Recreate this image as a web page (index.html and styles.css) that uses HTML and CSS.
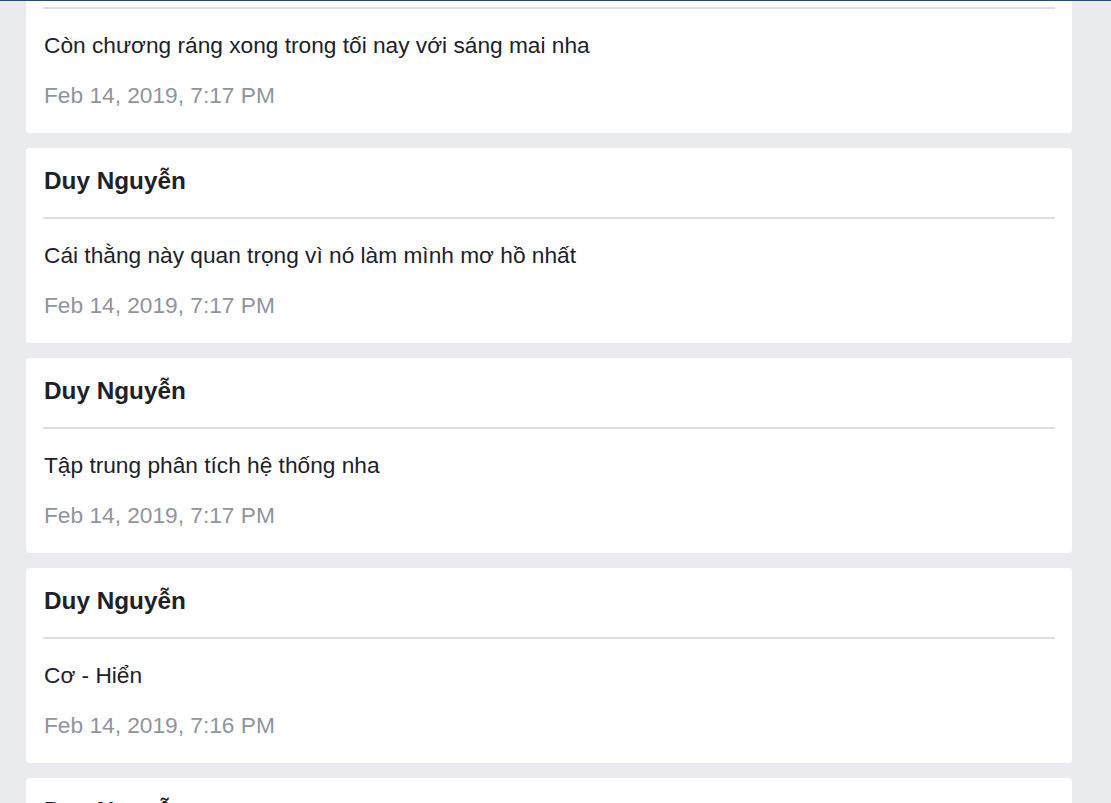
FILE: index.html
```html
<!DOCTYPE html>
<html lang="vi">
<head>
<meta charset="utf-8">
<link rel="stylesheet" href="styles.css">
</head>
<body>
<div class="topbar"></div>
<main class="list">
  <article class="card">
    <header class="card-head">Duy Nguyễn</header>
    <div class="divider"></div>
    <p class="msg">Còn chương ráng xong trong tối nay với sáng mai nha</p>
    <p class="time">Feb 14, 2019, 7:17 PM</p>
  </article>
  <article class="card">
    <header class="card-head">Duy Nguyễn</header>
    <div class="divider"></div>
    <p class="msg">Cái thằng này quan trọng vì nó làm mình mơ hồ nhất</p>
    <p class="time">Feb 14, 2019, 7:17 PM</p>
  </article>
  <article class="card">
    <header class="card-head">Duy Nguyễn</header>
    <div class="divider"></div>
    <p class="msg">Tập trung phân tích hệ thống nha</p>
    <p class="time">Feb 14, 2019, 7:17 PM</p>
  </article>
  <article class="card">
    <header class="card-head">Duy Nguyễn</header>
    <div class="divider"></div>
    <p class="msg">Cơ - Hiển</p>
    <p class="time">Feb 14, 2019, 7:16 PM</p>
  </article>
  <article class="card">
    <header class="card-head">Duy Nguyễn</header>
    <div class="divider"></div>
    <p class="msg">Đọc lại phần này</p>
    <p class="time">Feb 14, 2019, 7:16 PM</p>
  </article>
</main>
</body>
</html>
```
FILE: styles.css
```css
html, body {
  margin: 0;
  padding: 0;
  background: #e9ebee;
  overflow: hidden;
  height: 803px;
}
body {
  font-family: "Liberation Sans", Arial, Helvetica, sans-serif;
  color: #1d2129;
  position: relative;
}
.topbar {
  position: absolute;
  top: 0;
  left: 0;
  right: 0;
  height: 1px;
  background: #29487d;
  z-index: 2;
}
.list {
  display: flex;
  flex-direction: column;
  gap: 15px;
  margin-top: -62px;
  padding: 0 39px 0 26px;
}
.card {
  background: #fff;
  border-radius: 4px;
  padding: 12px 17px 23px;
  height: 195px;
  box-sizing: border-box;
}
.card-head {
  font-size: 24.3px;
  font-weight: bold;
  line-height: 42px;
  padding-left: 1px;
  margin-bottom: 15px;
}
.divider {
  height: 2px;
  background: #dddfe2;
}
.msg {
  margin: 21px 0 0;
  padding-left: 1px;
  font-size: 22.7px;
  line-height: 30px;
}
.time {
  margin: 20px 0 0;
  padding-left: 1px;
  font-size: 22.7px;
  line-height: 30px;
  color: #90949c;
}
```
